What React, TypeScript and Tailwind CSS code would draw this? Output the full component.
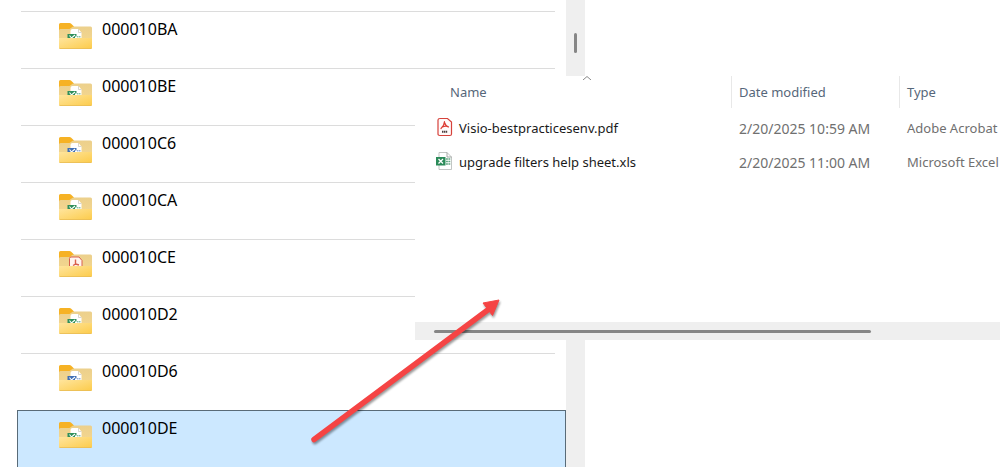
type Preview = "excel" | "word" | "pdf";

interface Folder {
  name: string;
  preview: Preview;
}

const FOLDERS: Folder[] = [
  { name: "000010BA", preview: "excel" },
  { name: "000010BE", preview: "excel" },
  { name: "000010C6", preview: "word" },
  { name: "000010CA", preview: "excel" },
  { name: "000010CE", preview: "pdf" },
  { name: "000010D2", preview: "excel" },
  { name: "000010D6", preview: "word" },
  { name: "000010DE", preview: "excel" },
];

const SELECTED = "000010DE";

const FILES = [
  { name: "Visio-bestpracticesenv.pdf", modified: "2/20/2025 10:59 AM", type: "Adobe Acrobat", icon: PdfIcon },
  { name: "upgrade filters help sheet.xls", modified: "2/20/2025 11:00 AM", type: "Microsoft Excel", icon: ExcelIcon },
];

function FolderIcon({ preview }: { preview: Preview }) {
  const accent = preview === "word" ? "#3f6fb5" : "#2f8f5b";

  return (
    <svg className="mt-0.5 w-[33px] h-[26px] shrink-0" viewBox="0 0 33 26" aria-hidden="true">
      <defs>
        <linearGradient id="folderBack" x1="0" y1="0" x2="0" y2="1">
          <stop offset="0" stopColor="#ecd08c" />
          <stop offset="1" stopColor="#f3d68f" />
        </linearGradient>
        <linearGradient id="folderFront" x1="0" y1="0" x2="1" y2="1">
          <stop offset="0" stopColor="#ffe59d" />
          <stop offset="1" stopColor="#fccb4a" />
        </linearGradient>
      </defs>
      <path d="M0 7V1.500Q0 0 1.500 0H10.500Q11.500 0 12.200 .7L15 3.500V8H0Z" fill="#f6b224" />
      <path d="M0 7.500Q0 6 1.500 6H10.500L14 3.500H31.500Q33 3.500 33 5V18H0Z" fill="url(#folderBack)" />
      {preview === "pdf" ? (
        <>
          <path d="M10.500 17V7.500Q10.500 6 12 6H20L23 9.500V17Z" fill="#fff4ef" stroke="#d9604c" />
          <path d="M16.500 8.500V13L14 14.500M16.500 13L20 14" fill="none" stroke="#d9604c" strokeWidth="1.400" />
        </>
      ) : (
        <>
          <path d="M11.500 16V8Q11.500 6 13.500 6H19.500L22.500 9.500V16Z" fill="#fff" />
          <path d="M19.500 6V9.500H22.500" fill="none" stroke="#c9c5bb" strokeWidth=".7" />
          <path d="M8.500 16V11H17.500V13.500H16V16Z" fill={accent} />
          <path d="M10.500 12.500L12.500 15L16 12" fill="none" stroke="#fff" strokeWidth="1.100" />
          <path d="M18 13.800H22" stroke={accent} strokeWidth=".8" strokeDasharray="1.500 .5" />
        </>
      )}
      <path d="M0 15H33V24.500Q33 26 31.500 26H1.500Q0 26 0 24.500Z" fill="url(#folderFront)" />
      <path d="M.5 25.500H32.500" stroke="#e9bd55" strokeWidth=".8" />
    </svg>
  );
}

function PdfIcon() {
  return (
    <svg className="-mt-1 w-[18px] h-5 shrink-0" viewBox="0 0 18 20" aria-hidden="true">
      <path d="M4 1.500H11.500L15.500 5V17Q15.500 18.500 14 18.500H4Q2 18.500 2 17V3Q2 1.500 4 1.500Z" fill="#fffafa" stroke="#d6423b" strokeWidth="1.200" />
      <path d="M8.500 4.500Q8.500 8 5 11.500M8.500 5.500Q9.500 9 12.500 10M6 10.300Q9 8.500 12.500 9.700" fill="none" stroke="#dc3a32" strokeWidth="1.200" strokeLinecap="round" />
      <path d="M6 14.800H11.500" stroke="#4a3d3d" strokeWidth="2" strokeDasharray="1.400 .5" />
    </svg>
  );
}

function ExcelIcon() {
  return (
    <svg className="-mt-1 w-[18px] h-5 shrink-0" viewBox="0 0 18 20" aria-hidden="true">
      <path d="M3 1.500H11L15.500 6V18.500H3Z" fill="#fff" stroke="#b3b8b5" strokeWidth=".8" />
      <path d="M11 1.500V6H15.500" fill="none" stroke="#8d9491" strokeWidth=".8" />
      <path d="M10 8H14.500M10 10.500H14.500M10 13H14.500" stroke="#63a783" strokeWidth="1.500" strokeDasharray="1.900 .5" />
      <path d="M0 6H9.500V14.500H0Z" fill="#2b8b59" />
      <path d="M2.500 8L7 12.500M7 8L2.500 12.500" stroke="#fff" strokeWidth="1.300" />
    </svg>
  );
}

function FolderList() {
  return (
    <ul className="flex-1 min-w-0 pt-[11px]">
      {FOLDERS.map((folder) => {
        const selected = folder.name === SELECTED;
        return (
          <li key={folder.name} className={selected ? "pl-[17px]" : "pl-[21px] pr-[11px]"}>
            <button
              type="button"
              aria-pressed={selected}
              className={`flex items-start gap-[10px] w-full h-[57px] pt-[9px] text-left text-base leading-4 text-black ${
                selected
                  ? "pl-[41px] bg-[#cce8ff] border border-b-0 border-[#596b78]"
                  : "pl-[38px] border-t border-[#dcdcdc]"
              }`}
            >
              <FolderIcon preview={folder.preview} />
              <span>{folder.name}</span>
            </button>
          </li>
        );
      })}
    </ul>
  );
}

function FilePanel() {
  return (
    <section className="absolute top-[76px] left-[415px] right-0 overflow-hidden bg-white">
      <table className="table-fixed w-full text-[13px] text-left whitespace-nowrap">
        <colgroup>
          <col className="w-[316px]" />
          <col className="w-[168px]" />
          <col />
        </colgroup>
        <thead>
          <tr className="h-9 text-[#56677a]">
            <th className="p-0 pl-7 align-top font-normal">
              <div className="flex flex-col h-8">
                <svg className="self-center w-2 h-1" viewBox="0 0 8 4" aria-hidden="true">
                  <path d="M0 4L4 .5L8 4" fill="none" stroke="#888" />
                </svg>
                <span className="pl-[7px] leading-6">Name</span>
              </div>
            </th>
            <th className="p-0 align-top font-normal">
              <div className="h-8 pl-[7px] border-l border-[#e8e8e8] leading-8">Date modified</div>
            </th>
            <th className="p-0 align-top font-normal">
              <div className="h-8 pl-[7px] border-l border-[#e8e8e8] leading-8">Type</div>
            </th>
          </tr>
        </thead>
        <tbody>
          {FILES.map(({ name, modified, type, icon: Icon }) => (
            <tr key={name} className="h-[34px] text-[#707070]">
              <td className="p-0 pl-[21px]">
                <div className="flex items-center gap-[5px] text-[#1a1a1a]">
                  <Icon />
                  {name}
                </div>
              </td>
              <td className="p-0 pl-2 text-sm">{modified}</td>
              <td className="p-0 pl-2">{type}</td>
            </tr>
          ))}
        </tbody>
      </table>

      {/* Horizontal scrollbar */}
      <div className="mt-[142px] flex items-center h-[18px] pl-[19px] bg-[#efefef]">
        <div className="w-[437px] h-[3px] rounded-full bg-[#868686]" />
      </div>
    </section>
  );
}

function Arrow() {
  return (
    <svg className="absolute top-[290px] left-[300px] w-[210px] h-[160px] pointer-events-none drop-shadow-[1px_2px_1px_rgba(0,0,0,0.4)]" viewBox="0 0 210 160" aria-hidden="true">
      <path d="M14 149.500L187 20.500" stroke="#f54444" strokeWidth="5.500" strokeLinecap="round" />
      <path d="M199 10L183 13L192.500 25.500Z" fill="#f54444" stroke="#f54444" strokeLinejoin="round" />
    </svg>
  );
}

export default function App() {
  return (
    <main className="relative overflow-hidden bg-white font-['Noto_Sans',sans-serif]">
      <div className="flex w-[585px]">
        <FolderList />
        {/* Vertical scrollbar */}
        <div className="flex justify-center w-[19px] pt-[33px] bg-[#efefef]">
          <div className="w-[3px] h-5 rounded-full bg-[#868686]" />
        </div>
      </div>
      <FilePanel />
      <Arrow />
    </main>
  );
}
